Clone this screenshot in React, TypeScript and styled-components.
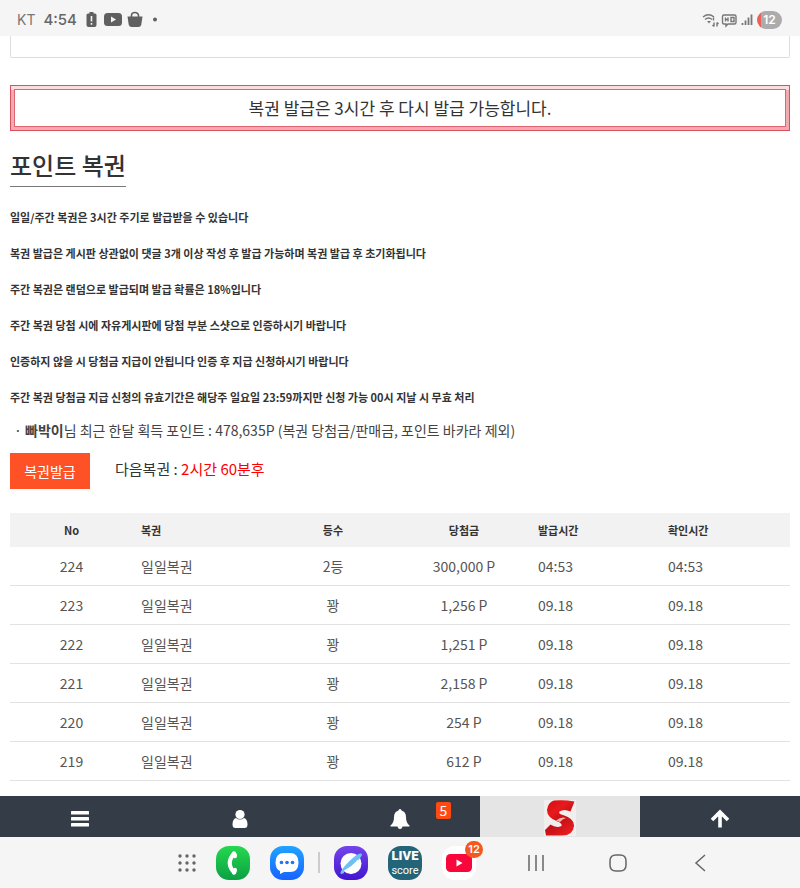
import React from "react";
import styled, { createGlobalStyle } from "styled-components";

const GlobalStyle = createGlobalStyle`
  *, *::before, *::after { box-sizing: border-box; }
  body {
    margin: 0;
    background: #fff;
    color: #333;
    font-family: "Noto Sans CJK KR", "Noto Sans", sans-serif;
    font-size: 14px;
    line-height: 20px;
  }
  h1, p { margin: 0; }
  button { font: inherit; border: 0; padding: 0; cursor: pointer; }
`;

const Page = styled.div`
  display: flex;
  flex-direction: column;
  min-height: 100vh;
`;

const StatusBar = styled.header`
  display: flex;
  align-items: center;
  justify-content: space-between;
  height: 36px;
  padding: 4px 18px 0 17px;
  background: #f5f5f5;
  color: #666;
  font-family: Inter, sans-serif;
  font-size: 15px;
`;

const StatusGroup = styled.div<{ $gap: number }>`
  display: flex;
  align-items: center;
  gap: ${(p) => p.$gap}px;
`;

const Carrier = styled.span`
  color: #777;
  font-size: 14px;
`;

const Clock = styled.span`
  font-weight: 500;
`;

const Battery = styled.span`
  width: 25px;
  height: 18px;
  border-radius: 9px;
  background: linear-gradient(90deg, #e8625c 4px, #acacac 4px);
  color: #fff;
  font-size: 12px;
  font-weight: 600;
  line-height: 18px;
  text-align: center;
`;

const Main = styled.main`
  flex: 1;
  padding: 0 10px;
`;

const PanelEnd = styled.div`
  height: 22px;
  border: 1px solid #ddd;
  border-top: 0;
  border-radius: 0 0 2px 2px;
`;

const Notice = styled.div`
  margin-top: 27px;
  padding: 3px;
  border: 1px solid #d9515f;
  background: linear-gradient(#fbdde0 4px, #f3a9b0 4px);
`;

const NoticeText = styled.p`
  padding: 6px;
  border: 1px solid #dd6672;
  background: #fff;
  font-size: 17px;
  line-height: 24px;
  text-align: center;
`;

const Title = styled.h1`
  display: table;
  margin-top: 18px;
  padding-bottom: 6px;
  border-bottom: 1px solid #777;
  font-size: 24px;
  font-weight: 500;
  line-height: 31px;
`;

const Rules = styled.div`
  display: grid;
  gap: 16px;
  margin-top: 20px;
`;

const Rule = styled.p`
  font-size: 11px;
  font-weight: 700;
  line-height: 20px;
`;

const Points = styled.p`
  margin: 13px 0 13px 4px;
  color: #444;
`;

const IssueRow = styled.div`
  display: flex;
  align-items: flex-start;
  gap: 25px;
`;

const IssueButton = styled.button`
  width: 80px;
  height: 36px;
  background: #ff5126;
  color: #fff;
`;

const NextTime = styled.p`
  font-size: 15px;
  line-height: 32px;
`;

const Highlight = styled.span`
  color: #f00;
`;

const Table = styled.table`
  width: 100%;
  margin: 24px 0 13px;
  border-collapse: separate;
  border-spacing: 0;
  table-layout: fixed;
`;

type CellProps = { $align?: "left" | "center" };

const HeadCell = styled.th<CellProps>`
  height: 34px;
  padding: 0 8px;
  background: #f2f2f2;
  font-size: 11px;
  text-align: ${(p) => p.$align ?? "center"};
`;

const Cell = styled.td<CellProps>`
  height: 39px;
  padding: 0 8px;
  border-bottom: 1px solid #e2e2e2;
  color: #555;
  text-align: ${(p) => p.$align ?? "center"};
`;

const Col = styled.col<{ $share: number }>`
  width: calc(100% * ${(p) => p.$share} / 780);
`;

const SiteNav = styled.nav`
  display: grid;
  grid-template-columns: repeat(5, 1fr);
  height: 41px;
`;

const NavButton = styled.button<{ $light?: boolean }>`
  position: relative;
  display: flex;
  align-items: center;
  justify-content: center;
  padding-top: ${(p) => (p.$light ? 2 : 5)}px;
  background: ${(p) => (p.$light ? "#e5e5e5" : "#333c47")};
  color: #fff;
`;

const NavBadge = styled.span`
  position: absolute;
  top: 6px;
  left: 116px;
  width: 15px;
  height: 17px;
  border-radius: 2px;
  background: #ff4a12;
  font-size: 14px;
  line-height: 17px;
`;

const Dock = styled.nav`
  display: flex;
  align-items: center;
  height: 51px;
  padding-left: 21%;
  background: #f5f5f5;
`;

const DockButton = styled.button<{ $w: number }>`
  position: relative;
  display: flex;
  align-items: center;
  justify-content: center;
  width: ${(p) => p.$w}px;
  height: 51px;
  background: none;
`;

const Divider = styled.span`
  width: 2px;
  height: 21px;
  margin: 0 4px;
  background: #ccc;
`;

const SystemKeys = styled.div`
  display: flex;
  margin-left: 9px;
`;

const LiveIcon = styled.span`
  display: flex;
  flex-direction: column;
  align-items: center;
  justify-content: center;
  width: 34px;
  height: 34px;
  border-radius: 13px;
  background: #246478;
  color: #fff;
`;

const LiveTop = styled.span`
  font-family: Roboto, sans-serif;
  font-size: 13px;
  font-weight: 900;
  line-height: 16px;
`;

const LiveBottom = styled.span`
  font-family: Roboto, sans-serif;
  font-size: 11px;
  line-height: 13px;
`;

const DockBadge = styled.span`
  position: absolute;
  top: 4px;
  left: 33px;
  width: 18px;
  height: 17px;
  border-radius: 9px;
  background: #f2581f;
  color: #fff;
  font-family: Inter, sans-serif;
  font-size: 11px;
  font-weight: 600;
  line-height: 17px;
`;

const rules = [
  "일일/주간 복권은 3시간 주기로 발급받을 수 있습니다",
  "복권 발급은 게시판 상관없이 댓글 3개 이상 작성 후 발급 가능하며 복권 발급 후 초기화됩니다",
  "주간 복권은 랜덤으로 발급되며 발급 확률은 18%입니다",
  "주간 복권 당첨 시에 자유게시판에 당첨 부분 스샷으로 인증하시기 바랍니다",
  "인증하지 않을 시 당첨금 지급이 안됩니다 인증 후 지급 신청하시기 바랍니다",
  "주간 복권 당첨금 지급 신청의 유효기간은 해당주 일요일 23:59까지만 신청 가능 00시 지날 시 무효 처리",
];

const columnShares = [123, 135, 130, 132, 130, 130];

const rows = [
  ["224", "일일복권", "2등", "300,000 P", "04:53"],
  ["223", "일일복권", "꽝", "1,256 P", "09.18"],
  ["222", "일일복권", "꽝", "1,251 P", "09.18"],
  ["221", "일일복권", "꽝", "2,158 P", "09.18"],
  ["220", "일일복권", "꽝", "254 P", "09.18"],
  ["219", "일일복권", "꽝", "612 P", "09.18"],
];

const NoticeIcons = () => (
  <svg width="74" height="18" viewBox="0 0 74 18" fill="#606060">
    <path d="M3 2.500h1.500V1h4v1.500H10q1.500 0 1.500 1.500v10q0 2-2 2h-6q-2 0-2-2V4q0-1.500 1.500-1.500z" />
    <path d="M6.500 5v5.500M6.500 12v1.800" stroke="#f5f5f5" strokeWidth="1.600" />
    <rect x="19" y="2" width="18" height="13" rx="3.500" />
    <path d="M26 5.500v6l5-3z" fill="#f5f5f5" />
    <path d="M42.500 5.500h15l-1.200 8q-.5 2.500-3 2.500h-6.600q-2.500 0-3-2.500z" />
    <path d="M46.500 6V4.500a3.500 3 0 0 1 7 0V6" fill="none" stroke="#606060" strokeWidth="1.600" />
    <circle cx="70" cy="8.500" r="2" />
  </svg>
);

const SignalIcons = () => (
  <svg width="51" height="16" viewBox="0 0 51 16" fill="none" stroke="#777" strokeWidth="1.400">
    <path d="M1 5q5.500-4.500 11 0M3 7.500q3.500-3 7 0" />
    <path d="M5 9h4l-2 2.500z" fill="#777" stroke="none" />
    <path d="M11.500 5.500v3M12 10.500v4M10.500 13l1.500 1.500M15 14.500v-4M15 10.500l1.500 1.500" />
    <path d="M22 3h10.500q1.500 0 1.500 1.500v6q0 1.500-1.500 1.500H26l-2 2v-2h-2q-1.500 0-1.500-1.500v-6Q20.500 3 22 3zM23.500 5.500v4M26 5.500v4M23.500 7.500H26M29 5.500h3v4h-3z" />
    <path d="M40.500 11v2M43.500 8.500V13M46.500 5.500V13M49.500 2.500V13" strokeWidth="1.800" />
  </svg>
);

const MenuIcon = () => (
  <svg width="18" height="18" viewBox="0 0 18 18" fill="#fff">
    <rect y="1" width="18" height="3.500" rx=".6" />
    <rect y="7" width="18" height="3.500" rx=".6" />
    <rect y="13" width="18" height="3.500" rx=".6" />
  </svg>
);

const UserIcon = () => (
  <svg width="16" height="20" viewBox="0 0 16 20" fill="#fff">
    <circle cx="8" cy="5.500" r="4.600" />
    <path d="M4 9q4 3 8 0 3.500 1 3.500 6.500 0 3.500-3 3.500h-9q-3 0-3-3.500Q.5 10 4 9z" />
  </svg>
);

const BellIcon = () => (
  <svg width="22" height="22" viewBox="0 0 22 22" fill="#fff">
    <path d="M11 1q1.500 0 1.500 1.600Q17 4 17 9q0 6 3.500 8.500v1H13.500q-.5 2.500-2.500 2.500t-2.500-2.500H1.500v-1Q5 15 5 9q0-5 4.500-6.400Q9.500 1 11 1z" />
  </svg>
);

const LogoIcon = () => (
  <svg width="32" height="36" viewBox="0 0 32 36">
    <defs>
      <linearGradient id="logoRed" gradientUnits="userSpaceOnUse" x1="4" y1="2" x2="28" y2="34">
        <stop offset="0" stopColor="#d80f14" />
        <stop offset=".3" stopColor="#e81a1c" />
        <stop offset=".55" stopColor="#c41016" />
        <stop offset="1" stopColor="#ec2020" />
      </linearGradient>
    </defs>
    <rect width="32" height="36" fill="#f1eeee" />
    <path
      d="M10 .5Q20-.5 30.500 1.500L26.500 11.500Q20 8.500 15.500 11.500 14 13.500 19 15 30.500 18.500 30 26 29 35.500 18 35.500H2L1 30 6.500 24.500Q12 28.500 17.500 26 18.500 23.500 13.500 21.500 3 17.500 3 10 4 2 10 .5z"
      fill="url(#logoRed)"
    />
    <path d="M12 20.500q5-4 10-2.500-3.500 1.200-6 4z" fill="#f7b3ac" />
  </svg>
);

const UpIcon = () => (
  <svg width="20" height="20" viewBox="0 0 20 20" fill="none" stroke="#fff" strokeWidth="3.600">
    <path d="M10 18.500V4M2 11l8-8 8 8" />
  </svg>
);

const AppsIcon = () => (
  <svg width="20" height="20" viewBox="0 0 20 20" fill="#666">
    {[3, 10, 17].map((y) =>
      [3, 10, 17].map((x) => <circle key={`${x}-${y}`} cx={x} cy={y} r="1.700" />)
    )}
  </svg>
);

const PhoneIcon = () => (
  <svg width="34" height="34" viewBox="0 0 34 34">
    <defs>
      <linearGradient id="phoneBg" x1="0" y1="0" x2="0" y2="1">
        <stop stopColor="#25d84e" />
        <stop offset="1" stopColor="#0ca044" />
      </linearGradient>
    </defs>
    <rect width="34" height="34" rx="13" fill="url(#phoneBg)" />
    <path d="M18.500 7Q9 17 18.500 27" fill="none" stroke="#fff" strokeWidth="4" />
    <ellipse cx="18.500" cy="8.800" rx="2.300" ry="3.600" transform="rotate(-14 18.500 8.800)" fill="#fff" />
    <ellipse cx="18.500" cy="25.200" rx="2.300" ry="3.600" transform="rotate(14 18.500 25.200)" fill="#fff" />
  </svg>
);

const MessageIcon = () => (
  <svg width="34" height="34" viewBox="0 0 34 34">
    <defs>
      <linearGradient id="messageBg" x1="0" y1="0" x2="0" y2="1">
        <stop stopColor="#1fa4ff" />
        <stop offset="1" stopColor="#1763ff" />
      </linearGradient>
    </defs>
    <rect width="34" height="34" rx="13" fill="url(#messageBg)" />
    <path d="M14 7h6q8.500 0 8.500 9.500T20 26h-6l-4 2v-3q-4.500-2-4.500-8.500Q5.500 7 14 7z" fill="#fff" />
    <g fill="#2272f0">
      <circle cx="11.500" cy="16.500" r="1.800" />
      <circle cx="17" cy="16.500" r="1.800" />
      <circle cx="22.500" cy="16.500" r="1.800" />
    </g>
  </svg>
);

const BrowserIcon = () => (
  <svg width="34" height="34" viewBox="0 0 34 34">
    <defs>
      <linearGradient id="browserBg" x1="0" y1="0" x2="0" y2="1">
        <stop stopColor="#7444ea" />
        <stop offset="1" stopColor="#4116cf" />
      </linearGradient>
    </defs>
    <rect width="34" height="34" rx="13" fill="url(#browserBg)" />
    <circle cx="17" cy="17.500" r="10.500" fill="#fff" />
    <path
      d="M10 27q-4 2-3.500-.5Q7.500 23 15 15.500T26 7.500q3-.5 1.500 2.500Q25 14 19 19.500L10 24.500"
      fill="#6fc0f6"
    />
    <path d="M11 24.500Q17 21 24 13.500L25 24 17 28z" fill="#fff" />
  </svg>
);

const VideoIcon = () => (
  <svg width="34" height="34" viewBox="0 0 34 34">
    <rect width="34" height="34" rx="13" fill="#fff" />
    <rect x="4" y="8" width="26" height="18" rx="4.500" fill="#f9063b" />
    <path d="M14.500 13.500v7l6-3.500z" fill="#fff" />
  </svg>
);

const SystemIcon = ({ d }: { d: string }) => (
  <svg width="20" height="20" viewBox="0 0 20 20" fill="none" stroke="#666" strokeWidth="1.500">
    <path d={d} />
  </svg>
);

export default function App() {
  return (
    <Page>
      <GlobalStyle />
      <StatusBar>
        <StatusGroup $gap={8}>
          <Carrier>KT</Carrier>
          <Clock>4:54</Clock>
          <NoticeIcons />
        </StatusGroup>
        <StatusGroup $gap={4}>
          <SignalIcons />
          <Battery>12</Battery>
        </StatusGroup>
      </StatusBar>
      <Main>
        <PanelEnd />
        <Notice>
          <NoticeText>복권 발급은 3시간 후 다시 발급 가능합니다.</NoticeText>
        </Notice>
        <Title>포인트 복권</Title>
        <Rules>
          {rules.map((rule) => (
            <Rule key={rule}>{rule}</Rule>
          ))}
        </Rules>
        <Points>
          · <b>빠박이</b>님 최근 한달 획득 포인트 : 478,635P (복권 당첨금/판매금, 포인트 바카라 제외)
        </Points>
        <IssueRow>
          <IssueButton type="button">복권발급</IssueButton>
          <NextTime>
            다음복권 : <Highlight>2시간 60분후</Highlight>
          </NextTime>
        </IssueRow>
        <Table>
          <colgroup>
            {columnShares.map((share, i) => (
              <Col key={i} $share={share} />
            ))}
          </colgroup>
          <thead>
            <tr>
              <HeadCell scope="col">No</HeadCell>
              <HeadCell scope="col" $align="left">복권</HeadCell>
              <HeadCell scope="col">등수</HeadCell>
              <HeadCell scope="col">당첨금</HeadCell>
              <HeadCell scope="col" $align="left">발급시간</HeadCell>
              <HeadCell scope="col" $align="left">확인시간</HeadCell>
            </tr>
          </thead>
          <tbody>
            {rows.map(([no, name, rank, prize, time]) => (
              <tr key={no}>
                <Cell>{no}</Cell>
                <Cell $align="left">{name}</Cell>
                <Cell>{rank}</Cell>
                <Cell>{prize}</Cell>
                <Cell $align="left">{time}</Cell>
                <Cell $align="left">{time}</Cell>
              </tr>
            ))}
          </tbody>
        </Table>
      </Main>
      <SiteNav>
        <NavButton type="button" aria-label="메뉴"><MenuIcon /></NavButton>
        <NavButton type="button" aria-label="내 정보"><UserIcon /></NavButton>
        <NavButton type="button" aria-label="알림">
          <BellIcon />
          <NavBadge>5</NavBadge>
        </NavButton>
        <NavButton type="button" aria-label="홈" $light><LogoIcon /></NavButton>
        <NavButton type="button" aria-label="맨 위로"><UpIcon /></NavButton>
      </SiteNav>
      <Dock>
        <DockButton type="button" aria-label="앱 목록" $w={38}><AppsIcon /></DockButton>
        <DockButton type="button" aria-label="전화" $w={54}><PhoneIcon /></DockButton>
        <DockButton type="button" aria-label="메시지" $w={54}><MessageIcon /></DockButton>
        <Divider />
        <DockButton type="button" aria-label="인터넷" $w={54}><BrowserIcon /></DockButton>
        <DockButton type="button" $w={54}>
          <LiveIcon>
            <LiveTop>LIVE</LiveTop>
            <LiveBottom>score</LiveBottom>
          </LiveIcon>
        </DockButton>
        <DockButton type="button" aria-label="동영상" $w={54}>
          <VideoIcon />
          <DockBadge>12</DockBadge>
        </DockButton>
        <SystemKeys>
          <DockButton type="button" aria-label="최근 앱" $w={82}>
            <SystemIcon d="M3 2v16M10 2v16M17 2v16" />
          </DockButton>
          <DockButton type="button" aria-label="홈 화면" $w={82}>
            <SystemIcon d="M8 2h4q6 0 6 6v4q0 6-6 6H8q-6 0-6-6V8q0-6 6-6z" />
          </DockButton>
          <DockButton type="button" aria-label="뒤로" $w={82}>
            <SystemIcon d="M15 2L6 10l9 8" />
          </DockButton>
        </SystemKeys>
      </Dock>
    </Page>
  );
}
